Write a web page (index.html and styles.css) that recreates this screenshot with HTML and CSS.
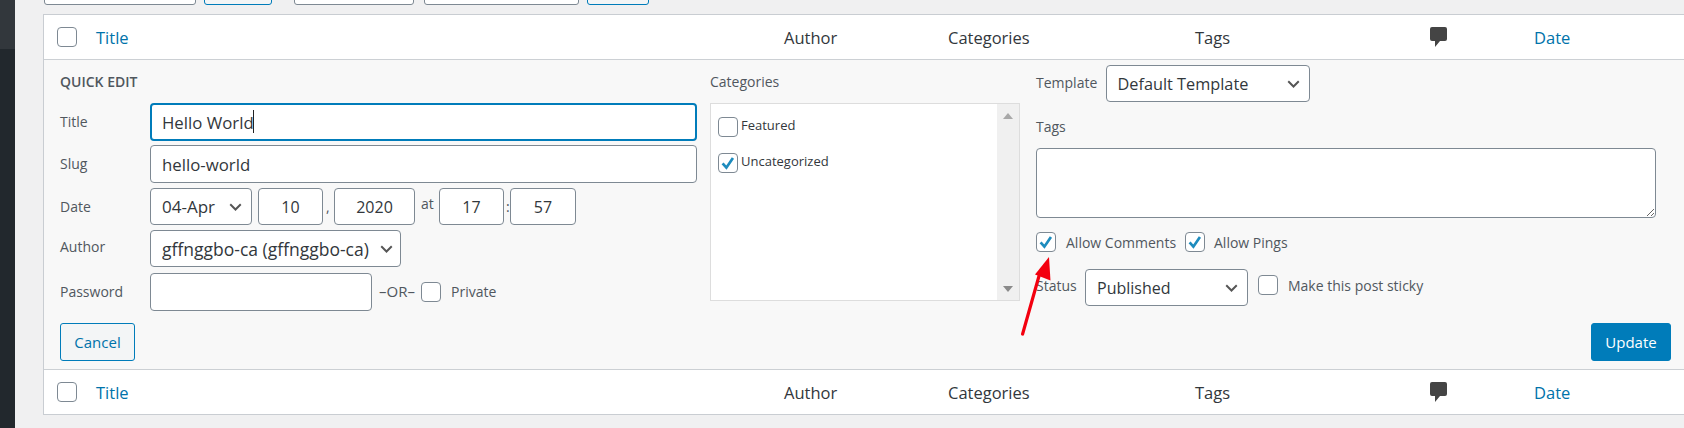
FILE: index.html
```html
<!DOCTYPE html>
<html lang="en">
<head>
<meta charset="utf-8">
<title>Quick Edit</title>
<link rel="stylesheet" href="styles.css">
</head>
<body>
<div class="page">
  <aside class="sidebar"><div class="sidebar-top"></div></aside>
  <main class="main">
    <div class="toolbar">
      <span class="tb tb-a"></span>
      <span class="tb tb-b blue"></span>
      <span class="tb tb-c"></span>
      <span class="tb tb-d"></span>
      <span class="tb tb-e blue"></span>
    </div>
    <section class="table">
      <div class="row head">
        <span class="cb-cell"><input type="checkbox" class="cb"></span>
        <a class="col-title link">Title</a>
        <span class="col-author">Author</span>
        <span class="col-cats">Categories</span>
        <span class="col-tags">Tags</span>
        <span class="col-com"><svg class="bubble" viewBox="0 0 17 20"><path d="M2 0h13a2 2 0 0 1 2 2v10a2 2 0 0 1-2 2H10L5 20v-6H2a2 2 0 0 1-2-2V2a2 2 0 0 1 2-2z"/></svg></span>
        <a class="col-date link">Date</a>
      </div>
      <form class="quick">
        <div class="q-main">
          <div class="q-left">
            <h4 class="q-title">QUICK EDIT</h4>
            <label class="q-row"><span class="q-lab">Title</span><span class="focus-wrap"><input class="inp inp-full focus" type="text" value="Hello World"><i class="caret"></i></span></label>
            <label class="q-row"><span class="q-lab">Slug</span><input class="inp inp-full" type="text" value="hello-world"></label>
            <div class="q-row r-date">
              <span class="q-lab">Date</span>
              <select class="sel s-month"><option>04-Apr</option></select>
              <input class="inp num s-day" value="10"><span class="sep-comma">,</span>
              <input class="inp num s-year" value="2020"><span class="sep-at">at</span>
              <input class="inp num s-hour" value="17"><span class="sep-colon">:</span>
              <input class="inp num s-min" value="57">
            </div>
            <label class="q-row r-author"><span class="q-lab">Author</span><select class="sel s-author"><option>gffnggbo-ca (gffnggbo-ca)</option></select></label>
            <div class="q-row r-pass">
              <span class="q-lab">Password</span>
              <input class="inp s-pass" type="text">
              <span class="or">–OR–</span>
              <input type="checkbox" class="cb">
              <span class="private">Private</span>
            </div>
          </div>
          <div class="q-mid">
            <div class="mid-lab">Categories</div>
            <div class="cat-box">
              <div class="cat-list">
                <label class="cat"><input type="checkbox" class="cb"><span>Featured</span></label>
                <label class="cat"><input type="checkbox" class="cb" checked><span>Uncategorized</span></label>
              </div>
              <div class="scroll"><i class="up"></i><i class="down"></i></div>
            </div>
          </div>
          <div class="q-right">
            <div class="r-template"><span class="lab">Template</span><select class="sel s-template"><option>Default Template</option></select></div>
            <div class="lab tags-lab">Tags</div>
            <textarea class="tags-area"></textarea>
            <div class="r-allow">
              <input type="checkbox" class="cb" checked><span class="lab a1">Allow Comments</span>
              <input type="checkbox" class="cb" checked><span class="lab a2">Allow Pings</span>
            </div>
            <div class="r-status">
              <span class="lab">Status</span>
              <select class="sel s-status"><option>Published</option></select>
              <input type="checkbox" class="cb">
              <span class="lab sticky">Make this post sticky</span>
            </div>
          </div>
        </div>
        <div class="q-actions">
          <button type="button" class="btn cancel">Cancel</button>
          <button type="button" class="btn update">Update</button>
        </div>
      </form>
      <div class="row foot">
        <span class="cb-cell"><input type="checkbox" class="cb"></span>
        <a class="col-title link">Title</a>
        <span class="col-author">Author</span>
        <span class="col-cats">Categories</span>
        <span class="col-tags">Tags</span>
        <span class="col-com"><svg class="bubble" viewBox="0 0 17 20"><path d="M2 0h13a2 2 0 0 1 2 2v10a2 2 0 0 1-2 2H10L5 20v-6H2a2 2 0 0 1-2-2V2a2 2 0 0 1 2-2z"/></svg></span>
        <a class="col-date link">Date</a>
      </div>
    </section>
  </main>
</div>
<svg class="arrow" viewBox="0 0 40 90" aria-hidden="true">
  <path d="M1.6 79 L18 21" stroke="#f3000f" stroke-width="3.2" stroke-linecap="round" fill="none"/>
  <path d="M28 2 L29.5 25.5 L14 19.5 Z" fill="#f3000f"/>
</svg>
</body>
</html>
```
FILE: styles.css
```css
* { box-sizing: border-box; }
html, body { margin: 0; height: 100%; overflow: hidden; }
body { background: #f0f0f1; font-family: "Open Sans", "Liberation Sans", sans-serif; color: #50575e; font-size: 14px; position: relative; }
.page { display: flex; height: 428px; }
.sidebar { width: 15px; flex: none; background: #22282d; }
.sidebar-top { height: 49px; background: #32373c; }
.main { flex: 1; min-width: 0; padding-left: 28px; }
.toolbar { height: 5px; margin-bottom: 9px; display: flex; align-items: flex-end; overflow: hidden; }
.tb { flex: none; height: 30px; background: #fff; border: 1px solid #7e8993; border-radius: 3px; }
.tb.blue { background: #f3f5f6; border-color: #007cba; }
.tb-a { width: 152px; margin-left: 1px; }
.tb-b { width: 68px; margin-left: 8px; }
.tb-c { width: 120px; margin-left: 22px; }
.tb-d { width: 155px; margin-left: 10px; }
.tb-e { width: 62px; margin-left: 8px; }

.table { background: #fff; border: 1px solid #c9cdd2; border-right: 0; }
.row { display: grid; grid-template-columns: 52px 688px 164px 247px 235px 104px 1fr; align-items: center; font-size: 16.5px; color: #32373c; }
.row.head { border-bottom: 1px solid #ccd0d4; height: 45px; }
.row.foot { border-top: 1px solid #ccd0d4; height: 45px; }
.cb-cell { display: flex; padding-left: 13px; }
.link { color: #0073aa; }
.col-title, .col-author, .col-cats, .col-tags, .col-date { white-space: nowrap; }
.bubble { display: block; width: 17px; height: 20px; fill: #444; }

.cb { appearance: none; -webkit-appearance: none; flex: none; margin: 0; width: 20px; height: 20px; background: #fff; border: 1px solid #7e8993; border-radius: 4px; }
.cb:checked { background: #fff url("data:image/svg+xml,%3Csvg xmlns='http://www.w3.org/2000/svg' viewBox='0 0 20 20'%3E%3Cpath d='M4 10.5l4.2 4.7L15.5 4.5' fill='none' stroke='%231e8cbe' stroke-width='3'/%3E%3C/svg%3E") center no-repeat; }

.quick { background: #f8f8f8; height: 309px; padding: 0 13px 0 16px; display: flex; flex-direction: column; }
.q-main { display: grid; grid-template-columns: 650px 326px 1fr; height: 263px; }
.q-left { display: flex; flex-direction: column; gap: 4px; padding-top: 11px; }
.q-title { margin: 0 0 6px; font-size: 14px; line-height: 22px; font-weight: 600; color: #50575e; }
.q-row { display: flex; align-items: center; }
.q-lab { width: 90px; flex: none; font-size: 14px; margin-bottom: 2px; }
.r-author .q-lab { margin-bottom: 5px; }
.r-date .q-lab { margin-bottom: 0; }
.inp { height: 38px; background: #fff; border: 1px solid #7e8993; border-radius: 4px; font: 16px "Open Sans", sans-serif; color: #32373c; padding: 0 11px; margin: 0; outline: 0; }
.inp-full { width: 547px; font-size: 16.8px; }
.focus-wrap { position: relative; display: block; }
.focus { border: 2px solid #007cba; padding: 0 10px; display: block; }
.caret { position: absolute; left: 103px; top: 7px; width: 1px; height: 23px; background: #222; }
.sel { appearance: none; -webkit-appearance: none; height: 37px; background: #fff url("data:image/svg+xml,%3Csvg xmlns='http://www.w3.org/2000/svg' viewBox='0 0 20 20'%3E%3Cpath d='M3 7l7 7 7-7' fill='none' stroke='%23555' stroke-width='2.6'/%3E%3C/svg%3E") right 8px top 52% / 15px 15px no-repeat; border: 1px solid #7e8993; border-radius: 4px; font: 16px "Open Sans", sans-serif; color: #32373c; padding: 0 24px 0 11px; margin: 0; }
.r-date { margin-top: 1px; height: 37px; }
.r-date .inp { height: 37px; text-align: center; padding: 0; }
.s-month { width: 102px; font-size: 17px; }
.s-day { width: 65px; margin-left: 6px; }
.sep-comma { width: 11px; font-size: 14px; padding-left: 3px; }
.s-year { width: 81px; }
.sep-at { width: 24px; font-size: 14px; padding-left: 6px; margin-bottom: 6px; }
.s-hour { width: 65px; }
.sep-colon { width: 6px; font-size: 14px; padding-left: 2px; }
.r-date .s-min { width: 66px; }
.r-author { margin-top: 1px; }
.s-author { width: 251px; padding-right: 20px; font-size: 17.5px; background-position: right 6px top 52%; }
.r-pass { margin-top: 2px; }
.s-pass { width: 222px; }
.or { font-size: 15px; margin-left: 7px; width: 42px; margin-bottom: 2px; }
.private { margin-left: 10px; font-size: 14px; margin-bottom: 2px; }

.mid-lab { font-size: 14px; line-height: 22px; margin-top: 11px; margin-bottom: 10px; }
.cat-box { display: flex; width: 310px; height: 198px; background: #fff; border: 1px solid #ddd; }
.cat-list { flex: 1; padding: 12px 7px; display: flex; flex-direction: column; gap: 14px; }
.cat { display: flex; align-items: center; font-size: 13px; color: #32373c; gap: 3px; }
.cat span { margin-bottom: 4px; }
.scroll { position: relative; width: 22px; background: #f0f0f0; }
.up, .down { position: absolute; left: 6px; width: 0; height: 0; border-left: 5px solid transparent; border-right: 5px solid transparent; }
.up { top: 9px; border-bottom: 6px solid #a8a8a8; }
.down { bottom: 8px; border-top: 6px solid #8a8a8a; }

.q-right { display: flex; flex-direction: column; padding-top: 5px; }
.lab { font-size: 14px; }
.r-template { display: flex; align-items: center; height: 37px; }
.r-template .lab { width: 69.5px; margin-bottom: 2px; }
.s-template { width: 204px; font-size: 16.3px; }
.tags-lab { margin-top: 14px; line-height: 22px; }
.tags-area { display: block; width: 620px; height: 70px; margin: 10px 0 0; background: #fff; border: 1px solid #7e8993; border-radius: 4px; }
.r-allow { display: flex; align-items: center; margin-top: 14px; }
.a1 { margin-left: 10px; width: 119px; }
.a2 { margin-left: 9px; }
.r-status { display: flex; align-items: center; margin-top: 17px; height: 37px; }
.s-status { width: 163px; margin-left: 9px; }
.r-status .cb { margin-left: 10px; margin-bottom: 5px; }
.sticky { margin-left: 10px; margin-bottom: 5px; }
.r-status > .lab:first-child { margin-bottom: 4px; width: 40px; }

.q-actions { display: flex; justify-content: space-between; }
.btn { height: 38px; font: 15px "Open Sans", sans-serif; border-radius: 3px; padding: 0; }
.cancel { width: 75px; background: #f3f5f6; border: 1px solid #007cba; color: #0073aa; }
.update { width: 80px; background: #007cba; border: 1px solid #007cba; color: #fff; }

.arrow { position: absolute; left: 1021px; top: 255px; width: 40px; height: 90px; }
```
